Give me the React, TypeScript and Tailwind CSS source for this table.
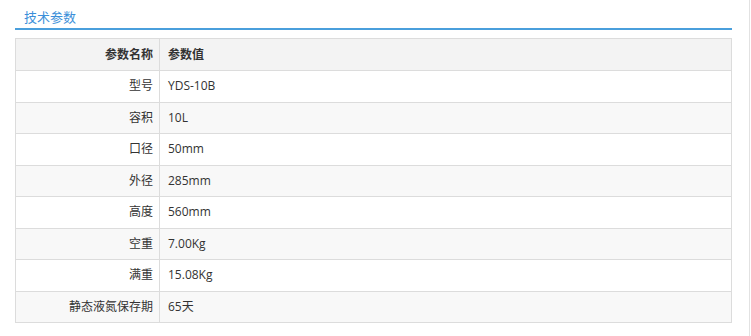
const rows: [string, string][] = [
  ["型号", "YDS-10B"],
  ["容积", "10L"],
  ["口径", "50mm"],
  ["外径", "285mm"],
  ["高度", "560mm"],
  ["空重", "7.00Kg"],
  ["满重", "15.08Kg"],
  ["静态液氮保存期", "65天"],
];

export default function App() {
  return (
    <div
      className="w-[750px] h-[336px] bg-white border-r border-[#e2e2e2]"
      style={{ fontFamily: '"Open Sans", "Noto Sans CJK SC", sans-serif' }}
    >
      <div className="pl-[15px] pr-[17px] pt-[6px]">
        <div className="h-[22px] pl-[9px] flex items-center">
          <span className="text-[13px] text-[#3b8fd9] leading-none">技术参数</span>
        </div>
        <div className="h-[2px] bg-[#4a9fdc]" />
        <div className="mt-[8px] border border-[#dcdcdc] text-[12px] text-[#333]">
          <div className="flex h-[31px] bg-[#f3f3f3] font-semibold">
            <div className="w-[144px] border-r border-[#dcdcdc] flex items-center justify-end pr-[6px]">
              参数名称
            </div>
            <div className="flex-1 flex items-center pl-[8px]">参数值</div>
          </div>
          {rows.map(([k, v], i) => (
            <div
              key={k}
              className={
                "flex h-[31.5px] border-t border-[#dcdcdc] " +
                (i % 2 === 1 ? "bg-[#f8f8f8]" : "bg-white")
              }
            >
              <div className="w-[144px] border-r border-[#dcdcdc] flex items-center justify-end pr-[6px]">
                {k}
              </div>
              <div className="flex-1 flex items-center pl-[8px]">{v}</div>
            </div>
          ))}
        </div>
      </div>
    </div>
  );
}
